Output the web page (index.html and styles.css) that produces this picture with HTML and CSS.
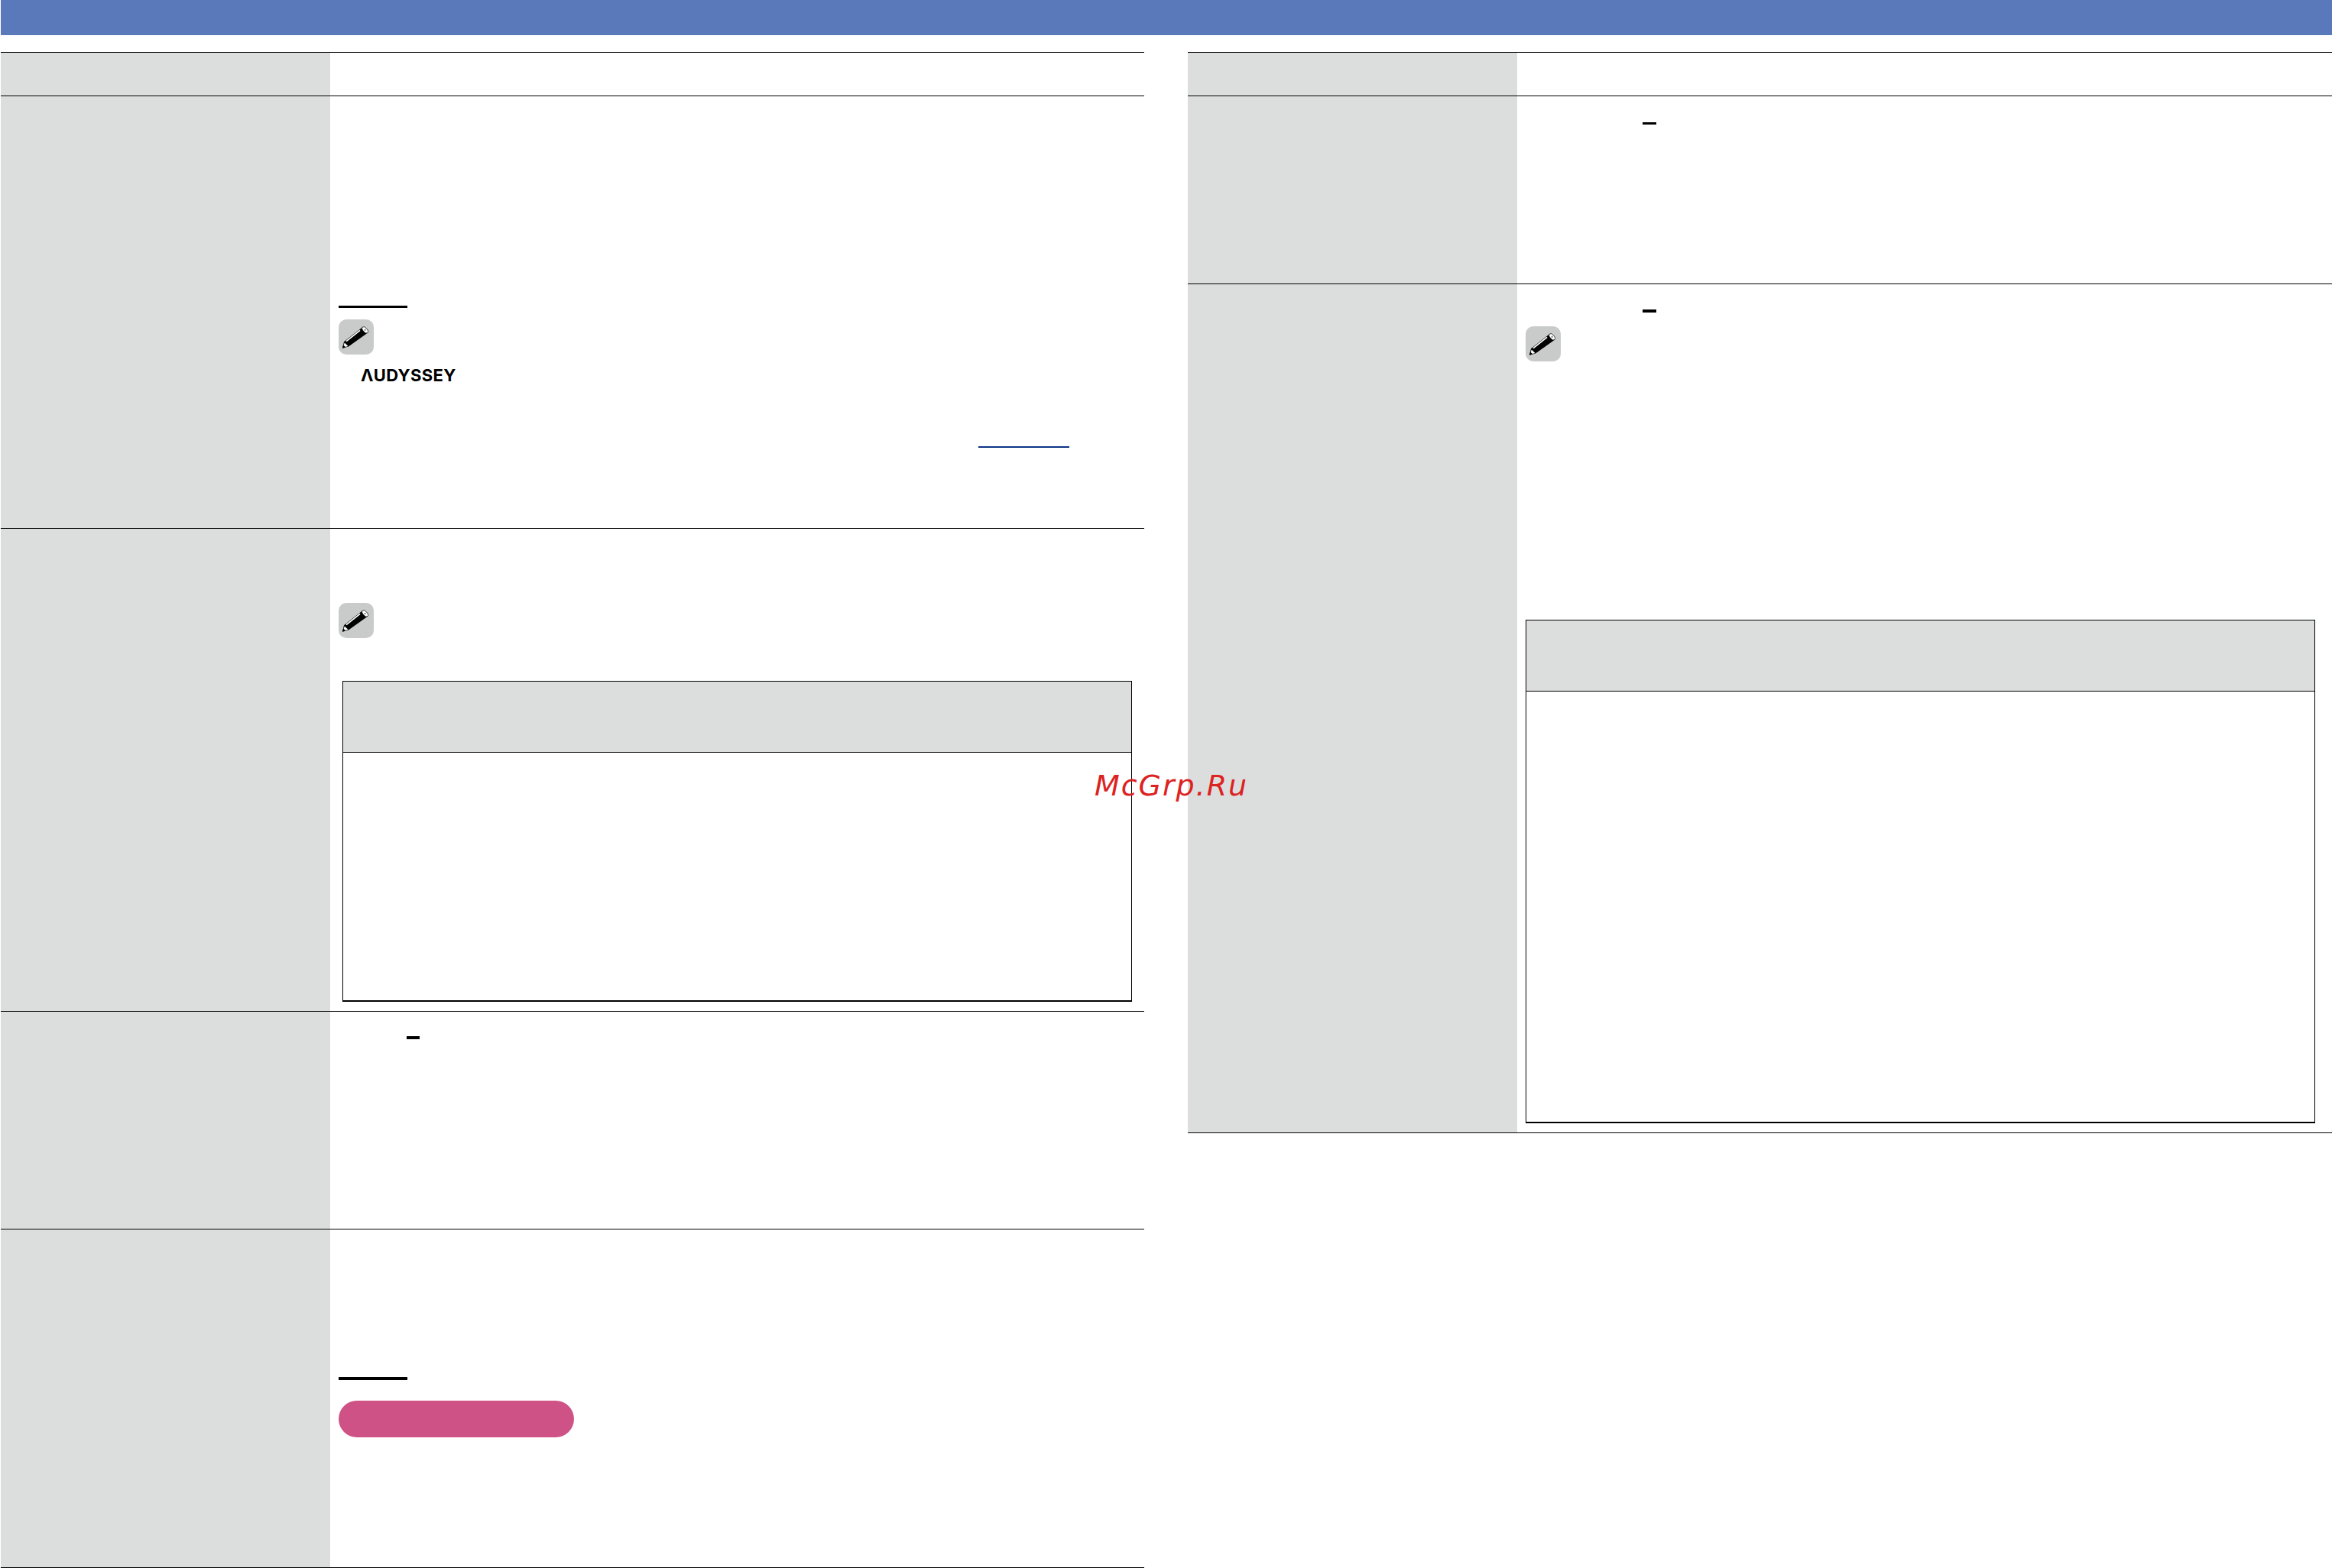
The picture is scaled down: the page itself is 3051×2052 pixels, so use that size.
FILE: index.html
```html
<!DOCTYPE html>
<html lang="en">
<head>
<meta charset="utf-8">
<title>Audyssey settings</title>
<link rel="stylesheet" href="styles.css">
</head>
<body>
<svg class="defs" aria-hidden="true">
  <symbol id="pencil" viewBox="0 0 46 46">
    <path d="M31.5 10 L38.2 17.6 L13 35.6 L5 37.8 L7 29.2Z" fill="#000"/>
    <path d="M10 28.6 L28 14.4" stroke="#fff" stroke-width="1.8" fill="none"/>
    <path d="M7.8 30.4 L12.4 35 L8.8 36 L6.6 34Z" fill="#fff"/>
    <path d="M5 37.8 L6 33.8 L8.8 36.6Z" fill="#000"/>
    <ellipse cx="34.6" cy="13.8" rx="2.7" ry="5" transform="rotate(-41 34.6 13.8)" fill="#fff" stroke="#000" stroke-width="0.7"/>
    <circle cx="34.6" cy="13.8" r="0.9" fill="#333"/>
  </symbol>
</svg>
<header class="topbar"></header>
<main class="columns">
  <section class="col col-left">
    <div class="row h-57"><div class="label"></div><div class="cell"></div></div>
    <div class="row h-566">
      <div class="label"></div>
      <div class="cell">
        <div class="rule rule-a"></div>
        <svg class="note note-a"><use href="#pencil"/></svg>
        <div class="logo">ΛUDYSSEY</div>
        <div class="link"></div>
      </div>
    </div>
    <div class="row h-632">
      <div class="label"></div>
      <div class="cell">
        <svg class="note note-b"><use href="#pencil"/></svg>
        <div class="sub sub-a"><div class="sub-head"></div></div>
      </div>
    </div>
    <div class="row h-285">
      <div class="label"></div>
      <div class="cell"><div class="dash dash-a"></div></div>
    </div>
    <div class="row h-443 last">
      <div class="label"></div>
      <div class="cell">
        <div class="rule rule-b"></div>
        <div class="pill"></div>
      </div>
    </div>
  </section>
  <section class="col col-right">
    <div class="row h-57"><div class="label"></div><div class="cell"></div></div>
    <div class="row h-246">
      <div class="label"></div>
      <div class="cell"><div class="dash dash-b"></div></div>
    </div>
    <div class="row h-1111 last">
      <div class="label"></div>
      <div class="cell">
        <div class="dash dash-c"></div>
        <svg class="note note-c"><use href="#pencil"/></svg>
        <div class="sub sub-b"><div class="sub-head"></div></div>
      </div>
    </div>
  </section>
</main>
<div class="watermark">McGrp.Ru</div>
</body>
</html>
```

FILE: styles.css
```css
* { box-sizing: border-box; }

html, body {
  margin: 0;
  background: #fff;
  font-family: "Liberation Sans", Arial, sans-serif;
}

body {
  position: relative;
  width: 3051px;
  height: 2052px;
  overflow: hidden;
  padding-left: 1px;
}

.defs { display: none; }

.topbar {
  height: 46px;
  background: #5a79bb;
}

.columns {
  display: flex;
  gap: 57px;
  margin-top: 22px;
}

.col-left { width: 1496px; }
.col-right { width: 1497px; }

.row {
  display: grid;
  grid-template-columns: 431px 1fr;
  border-top: 1px solid #000;
}

.row.last {
  border-bottom: 1px solid #000;
  box-sizing: content-box;
}

.h-57 { height: 57px; }
.h-246 { height: 246px; }
.h-285 { height: 285px; }
.h-443 { height: 442px; }
.h-566 { height: 566px; }
.h-632 { height: 632px; }
.h-1111 { height: 1110px; }

.label { background: #dcdedd; }

.cell {
  padding-left: 11px;
  min-width: 0;
}

.rule { width: 90px; background: #000; }
.rule-a { height: 3px; margin-top: 274px; }
.rule-b { height: 4px; margin-top: 193px; }

.note {
  display: block;
  width: 46px;
  height: 46px;
  background: #c9cbca;
  border-radius: 10px;
}
.note-a { margin-top: 15px; }
.note-b { margin-top: 97px; }
.note-c { margin-top: 18px; }

.logo {
  margin: 16px 0 0 29px;
  font-family: Inter, "Liberation Sans", sans-serif;
  font-weight: 700;
  font-size: 22px;
  line-height: 22px;
  letter-spacing: 0.35px;
  color: #000;
}

.link {
  width: 119px;
  height: 2px;
  margin: 82px 0 0 837px;
  background: #0b3486;
}

.sub {
  width: 1033px;
  border: 1px solid #000;
  border-bottom-width: 2px;
}
.sub-a { height: 420px; margin: 56px 0 0 5px; }
.sub-b { height: 659px; margin: 338px 0 0 0; }

.sub-head {
  height: 93px;
  background: #dcdedd;
  border-bottom: 1px solid #000;
}

.dash { background: #000; }
.dash-a { width: 17px; height: 4px; margin: 32px 0 0 89px; }
.dash-b { width: 18px; height: 3px; margin: 34px 0 0 153px; }
.dash-c { width: 18px; height: 4px; margin: 33px 0 0 153px; }

.pill {
  width: 308px;
  height: 48px;
  margin-top: 27px;
  background: #cf5287;
  border-radius: 24px;
}

.watermark {
  position: absolute;
  left: 1432px;
  top: 1005px;
  font-family: "DejaVu Sans", sans-serif;
  font-style: oblique;
  font-size: 38px;
  line-height: 46px;
  letter-spacing: 1.95px;
  color: #dd2222;
  white-space: nowrap;
}
```
